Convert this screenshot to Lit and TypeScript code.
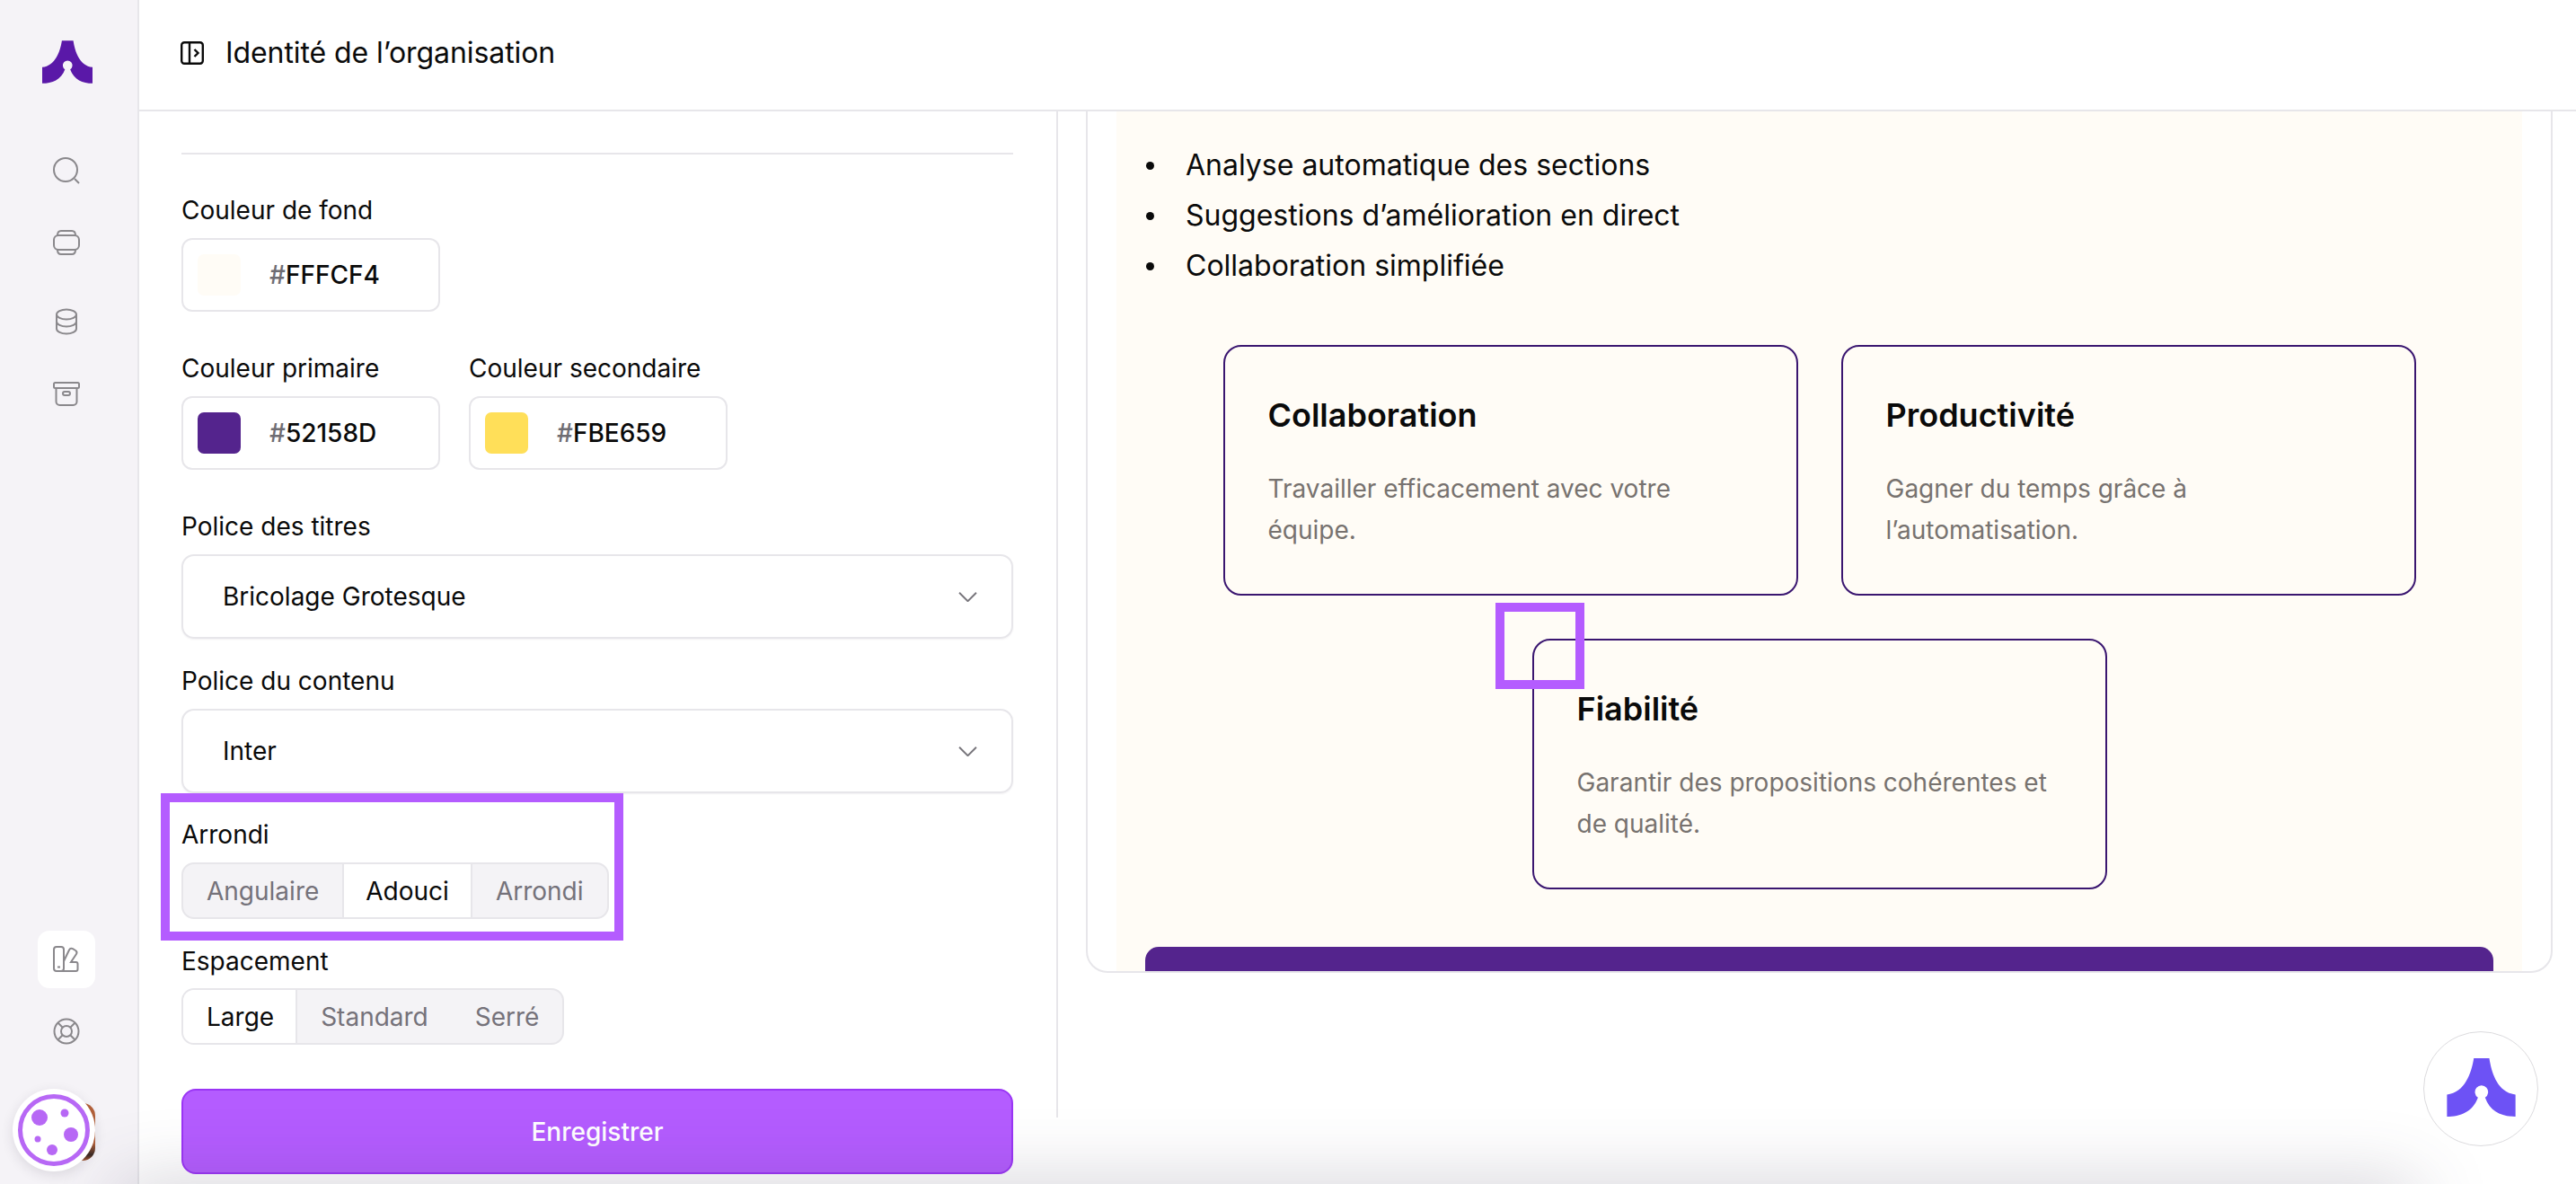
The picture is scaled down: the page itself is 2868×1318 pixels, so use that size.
import { LitElement, css, html, svg } from 'lit';
import { customElement } from 'lit/decorators.js';

const logo = () => html`<svg class="logo-mark" viewBox="0 0 230 196" aria-hidden="true">
  <path fill="currentColor" d="M90 0H142C150 50 170 115 230 122V196C185 196 145 180 128 132A22 22 0 1 0 104 132C87 180 45 196 0 196V122C60 115 82 50 90 0Z"/>
</svg>`;

const navIcons = {
  search: svg`<circle cx="14" cy="14" r="13"/><path d="M24 24l5 5"/>`,
  layers: svg`<rect x="1" y="7" width="28" height="16" rx="5"/><path d="M5 7C5 3 7 2 9 2H21C23 2 25 3 25 7M5 23C5 27 7 28 9 28H21C23 28 25 27 25 23"/>`,
  database: svg`<ellipse cx="15" cy="7" rx="11" ry="5.5"/><path d="M4 7V23C4 26 9 28.500 15 28.500S26 26 26 23V7M4 15C4 18 9 20.500 15 20.500S26 18 26 15"/>`,
  archive: svg`<rect x="1" y="2" width="28" height="6" rx="1.500"/><path d="M3.500 8V23A4 4 0 0 0 7.500 27H22.500A4 4 0 0 0 26.500 23V8"/><rect x="11" y="12" width="8" height="4" rx="2"/>`,
  palette: svg`<rect x="1" y="1" width="11" height="27" rx="3"/><path d="M5 23.500H8M12 17L18 4.500A3 3 0 0 1 22 3.200L25 5A3 3 0 0 1 26 9L20 18H25.500A2 2 0 0 1 27.500 20V26A2 2 0 0 1 25.500 28H9"/>`,
  help: svg`<circle cx="15" cy="15" r="13.500"/><circle cx="15" cy="15" r="6"/><path d="M5.500 5.500L10.700 10.700M24.500 5.500L19.300 10.700M5.500 24.500L10.700 19.300M24.500 24.500L19.300 19.300"/>`,
};

const chevron = html`<svg class="chevron" viewBox="0 0 20 10" aria-hidden="true"><path d="M1 0.500L10 9.500L19 0.500"/></svg>`;

@customElement('app-root')
export class AppRoot extends LitElement {
  static styles = css`
    :host {
      display: block;
      position: relative;
      width: 100%;
      height: 100vh;
      overflow: hidden;
      background: #fff;
      color: #0a0a0a;
      font-family: Inter, 'Liberation Sans', sans-serif;
    }
    * { box-sizing: border-box; }
    .shell { display: flex; height: 100%; }

    .rail {
      flex: none;
      width: 155px;
      height: 100%;
      background: #f5f3f7;
      border-right: 2px solid #e7e6ea;
      display: flex;
      flex-direction: column;
      align-items: center;
      padding-top: 45px;
      padding-right: 6px;
    }
    .rail .logo-mark { width: 56px; height: 48px; color: #5a18a8; margin-bottom: 82px; margin-left: 3px; }
    .nav-icon { width: 30px; height: 30px; fill: none; stroke: #8a888c; stroke-width: 2; display: block; }
    .rail-group { display: flex; flex-direction: column; align-items: center; }
    .nav-icon.layers { margin-top: 50px; }
    .nav-icon.database { margin-top: 58px; }
    .nav-icon.archive { margin-top: 51px; }
    .rail-bottom { margin-top: 582px; display: flex; flex-direction: column; align-items: center; gap: 33px; }
    .tile { width: 64px; height: 64px; border-radius: 13px; background: #fff; display: flex; align-items: center; justify-content: center; }

    .main { flex: 1; min-width: 0; display: flex; flex-direction: column; height: 100%; }
    .topbar {
      flex: none;
      height: 124px;
      border-bottom: 2px solid #e7e6ea;
      display: flex;
      align-items: center;
      gap: 24px;
      padding: 0 0 5px 46px;
      font-size: 32px;
      letter-spacing: -0.08px;
    }
    .panel-toggle { width: 26px; height: 26px; fill: none; stroke: #0a0a0a; stroke-width: 2.400; }
    .columns { flex: 1; min-height: 0; display: flex; }

    .form {
      flex: none;
      width: 1023px;
      border-right: 2px solid #e7e6ea;
      height: 1120px;
      padding: 46px 48px 0 47px;
    }
    .rule { height: 2px; background: #e7e6ea; margin-bottom: 42px; }
    .field { display: flex; flex-direction: column; gap: 11px; }
    .field.wide { margin-top: 43px; }
    .field.tight { margin-top: 27px; }
    .field.close { margin-top: 26px; }
    .field.snug { gap: 10px; }
    .label { font-size: 28px; line-height: 40px; }
    .swatches { display: flex; gap: 32px; margin-top: 43px; }
    .swatch-box {
      width: 288px;
      height: 82px;
      border: 2px solid #e7e6ea;
      border-radius: 12px;
      display: flex;
      align-items: center;
      gap: 32px;
      padding-left: 16px;
      font-size: 28px;
      font-weight: 500;
    }
    .chip { width: 48px; height: 46px; border-radius: 7px; }
    .hash { color: #6f6d73; }
    .select {
      height: 94px;
      border: 2px solid #e7e6ea;
      border-radius: 14px;
      box-shadow: 0 1px 2px rgba(30, 20, 50, 0.06);
      display: flex;
      align-items: center;
      justify-content: space-between;
      padding: 0 38px 0 44px;
      font-size: 28px;
    }
    .chevron { width: 21px; height: 11px; fill: none; stroke: #77757b; stroke-width: 1.800; }
    .segments {
      align-self: flex-start;
      display: flex;
      height: 63px;
      border: 2px solid #e7e6ea;
      border-radius: 14px;
      background: #f4f3f6;
      overflow: hidden;
      font-size: 28px;
      color: #75727a;
    }
    .seg { display: flex; align-items: center; justify-content: center; padding: 0 26px; }
    .seg.on { background: #fff; color: #0a0a0a; padding: 0 24px; border-left: 2px solid #e7e6ea; border-right: 2px solid #e7e6ea; }
    .seg.on:first-child { border-left: 0; padding: 0 24px 0 26px; }
    .save {
      margin-top: 49px;
      height: 95px;
      border: 2px solid #9a35f5;
      border-radius: 16px;
      background: #b45cff;
      color: #fff;
      font-size: 28px;
      font-weight: 500;
      display: flex;
      align-items: center;
      justify-content: center;
    }

    .preview { flex: 1; min-width: 0; padding-left: 31px; }
    .preview-card {
      width: 1633px;
      height: 959px;
      border: 2px solid #e7e6ea;
      border-top: 0;
      border-radius: 0 0 24px 24px;
      padding: 0 32px;
      overflow: hidden;
    }
    .canvas { height: 100%; background: #fffcf6; overflow: hidden; display: flex; flex-direction: column; align-items: center; padding-top: 32px; }
    .points { align-self: stretch; margin: 0; padding: 0 0 0 33px; list-style: none; font-size: 32px; line-height: 56px; }
    .points li { display: flex; align-items: center; gap: 35px; }
    .points li::before { content: ''; flex: none; width: 9px; height: 9px; border-radius: 50%; background: #0a0a0a; }
    .cards { width: 1328px; margin-top: 60px; display: flex; flex-wrap: wrap; justify-content: center; gap: 48px; }
    .card { width: 640px; height: 279px; border: 2px solid #3a1670; border-radius: 20px; padding: 54px 48px 0; }
    .card-title { margin: 0 0 37px; font-size: 36px; line-height: 44px; font-weight: 600; }
    .card-text { margin: 0; font-size: 28px; line-height: 46px; color: #77726f; }
    .cta { flex: none; width: 1501px; height: 60px; margin-top: 64px; background: #54248d; border-radius: 15px 15px 0 0; }

    .mark { position: absolute; border: 10px solid #b45cff; pointer-events: none; }
    .mark.seg-mark { left: 179px; top: 883px; width: 515px; height: 164px; }
    .mark.node-mark { left: 1665px; top: 671px; width: 99px; height: 96px; }

    .assistant {
      position: absolute;
      left: 2698px;
      top: 1148px;
      width: 128px;
      height: 128px;
      border: 1px solid #dcdbde;
      border-radius: 50%;
      background: #fff;
      display: flex;
      align-items: center;
      justify-content: center;
      padding-bottom: 4px;
    }
    .assistant .logo-mark { width: 77px; height: 65px; color: #6d52f5; }

    .avatar { position: absolute; left: 60px; top: 1228px; width: 46px; height: 64px; border-radius: 14px; background: linear-gradient(#b5623a 70%, #3b2a24 90%, #a4552f); }
    .cookie { position: absolute; left: 14px; top: 1212px; width: 92px; height: 92px; border-radius: 50%; background: #fff; box-shadow: 0 4px 14px rgba(40, 30, 60, 0.12); display: block; }
    .page-shade {
      position: absolute;
      left: 130px;
      right: 178px;
      top: 1318px;
      height: 60px;
      box-shadow: 0 0 80px rgba(70, 60, 90, 0.26);
    }
  `;

  private swatch(label: string, color: string, value: string) {
    return html`<div class="field">
      <div class="label">${label}</div>
      <div class="swatch-box">
        <span class="chip" style="background:${color}"></span>
        <span><span class="hash">#</span>${value}</span>
      </div>
    </div>`;
  }

  private selectField(label: string, value: string, extra: string) {
    return html`<div class="field ${extra}">
      <div class="label">${label}</div>
      <div class="select"><span>${value}</span>${chevron}</div>
    </div>`;
  }

  private segments(label: string, items: string[], active: number, extra: string) {
    return html`<div class="field ${extra}">
      <div class="label">${label}</div>
      <div class="segments">
        ${items.map((item, i) => html`<div class="seg ${i === active ? 'on' : ''}">${item}</div>`)}
      </div>
    </div>`;
  }

  private card(title: string, text: string) {
    return html`<div class="card">
      <h3 class="card-title">${title}</h3>
      <p class="card-text">${text}</p>
    </div>`;
  }

  private navIcon(name: keyof typeof navIcons) {
    return html`<svg class="nav-icon ${name}" viewBox="0 0 30 30" aria-hidden="true">${navIcons[name]}</svg>`;
  }

  render() {
    return html`
      <div class="shell">
        <aside class="rail">
          ${logo()}
          <div class="rail-group">
            ${this.navIcon('search')}
            ${this.navIcon('layers')}
            ${this.navIcon('database')}
            ${this.navIcon('archive')}
          </div>
          <div class="rail-bottom">
            <div class="tile">${this.navIcon('palette')}</div>
            ${this.navIcon('help')}
          </div>
        </aside>
        <div class="main">
          <header class="topbar">
            <svg class="panel-toggle" viewBox="0 0 26 26" aria-hidden="true">
              <rect x="1.200" y="1.200" width="23.600" height="23.600" rx="3"/>
              <path d="M10 1.200V24.800M15.500 9L19.500 13L15.500 17"/>
            </svg>
            <span>Identité de l’organisation</span>
          </header>
          <div class="columns">
            <section class="form">
              <div class="rule"></div>
              ${this.swatch('Couleur de fond', '#fffcf6', 'FFFCF4')}
              <div class="swatches">
                ${this.swatch('Couleur primaire', '#54248d', '52158D')}
                ${this.swatch('Couleur secondaire', '#ffdf59', 'FBE659')}
              </div>
              ${this.selectField('Police des titres', 'Bricolage Grotesque', 'wide')}
              ${this.selectField('Police du contenu', 'Inter', 'tight')}
              ${this.segments('Arrondi', ['Angulaire', 'Adouci', 'Arrondi'], 1, 'close')}
              ${this.segments('Espacement', ['Large', 'Standard', 'Serré'], 0, 'tight snug')}
              <div class="save">Enregistrer</div>
            </section>
            <section class="preview">
              <div class="preview-card">
                <div class="canvas">
                  <ul class="points">
                    <li>Analyse automatique des sections</li>
                    <li>Suggestions d’amélioration en direct</li>
                    <li>Collaboration simplifiée</li>
                  </ul>
                  <div class="cards">
                    ${this.card('Collaboration', 'Travailler efficacement avec votre équipe.')}
                    ${this.card('Productivité', 'Gagner du temps grâce à l’automatisation.')}
                    ${this.card('Fiabilité', 'Garantir des propositions cohérentes et de qualité.')}
                  </div>
                  <div class="cta"></div>
                </div>
              </div>
            </section>
          </div>
        </div>
      </div>
      <div class="page-shade"></div>
      <div class="mark seg-mark"></div>
      <div class="mark node-mark"></div>
      <div class="assistant">${logo()}</div>
      <div class="avatar"></div>
      <svg class="cookie" viewBox="0 0 92 92" aria-hidden="true">
        <circle cx="46" cy="46" r="37.500" fill="#fff" stroke="#b768f5" stroke-width="5"/>
        <g fill="#b768f5">
          <circle cx="30" cy="32" r="9"/><circle cx="58" cy="27" r="4.500"/><circle cx="65" cy="51" r="8"/>
          <circle cx="28" cy="56" r="3.500"/><circle cx="44" cy="68" r="6"/>
        </g>
      </svg>
    `;
  }
}
